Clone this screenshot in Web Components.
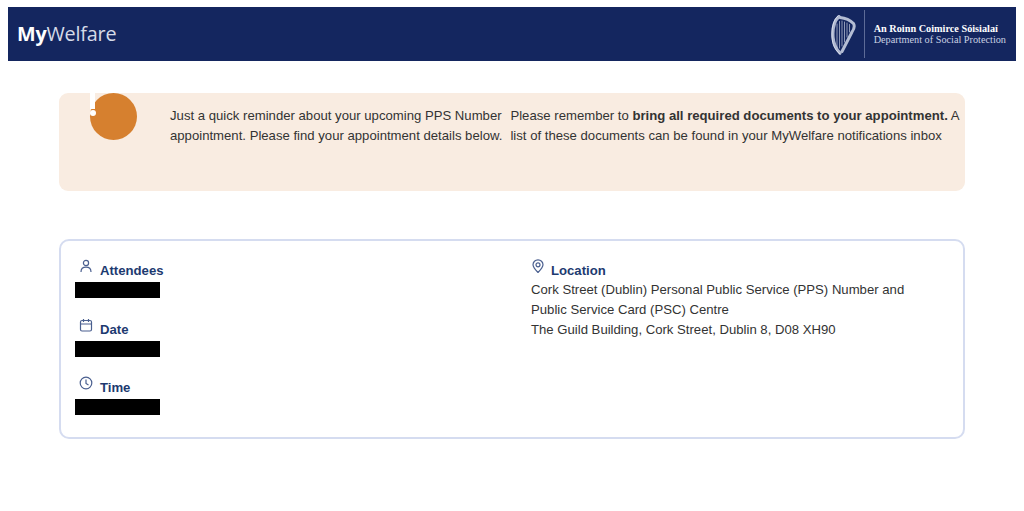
<!DOCTYPE html>
<html lang="en">
<head>
<meta charset="UTF-8">
<title>MyWelfare</title>
<style>
    html, body { margin: 0; background: #fff; }
    body { padding: 7px 8px 0; font-family: "Liberation Sans", Arial, sans-serif; color: #333; }
    main { display: block; padding: 32px 51px 0; }
</style>
</head>
<body>
<mw-header></mw-header>
<main>
    <mw-alert>
        <span slot="left">Just a quick reminder about your upcoming PPS Number appointment. Please find your appointment details below.</span>
        <span slot="right">Please remember to <b>bring all required documents to your appointment.</b> A list of these documents can be found in your MyWelfare notifications inbox</span>
    </mw-alert>
    <mw-card>
        <mw-detail slot="left" label="Attendees" icon="person"><mw-redacted></mw-redacted></mw-detail>
        <mw-detail slot="left" label="Date" icon="calendar"><mw-redacted></mw-redacted></mw-detail>
        <mw-detail slot="left" label="Time" icon="clock"><mw-redacted></mw-redacted></mw-detail>
        <mw-detail slot="right" label="Location" icon="pin">
            Cork Street (Dublin) Personal Public Service (PPS) Number and<br>
            Public Service Card (PSC) Centre<br>
            The Guild Building, Cork Street, Dublin 8, D08 XH90
        </mw-detail>
    </mw-card>
</main>

<script>
    class MwHeader extends HTMLElement {
        constructor() {
            super();
            this.attachShadow({mode: 'open'});
            this.shadowRoot.innerHTML = `
          <style>
            :host {
              display: flex;
              align-items: center;
              justify-content: space-between;
              height: 54px;
              background: #14265f;
              padding: 0 10px 0 9px;
              color: #fff;
            }
            .logo { font: 19.8px "Open Sans", sans-serif; letter-spacing: -0.2px; color: #d5dbe8; margin-top: -2px; }
            .logo b { color: #fff; font-weight: 700; }
            .dept { display: flex; align-items: center; height: 100%; }
            .harp { width: 26px; height: 40px; margin-top: 1px; }
            .rule { width: 1px; height: 48px; margin: 0 9px 0 7px; background: #5d6b97; }
            .name { font: 10.25px/11px "Liberation Serif", serif; color: #c9d0e2; white-space: nowrap; margin-top: -1px; }
            .name b { display: block; color: #fff; }
          </style>
          <div class="logo"><b>My</b>Welfare</div>
          <div class="dept">
            <svg class="harp" viewBox="0 0 26 40" fill="none" stroke="#c6cde0" stroke-linecap="round">
              <path stroke-width="3.200" stroke="#aeb7d0" d="M8 1.500C3 6 1.500 14 2 22 2.500 29 5 34 9 38"/>
              <path stroke-width="0.8" stroke="#e4e8f2" d="M7 1C2 5 0.500 14 1 22 1.500 30 4 35 9 39"/>
              <path stroke-width="3" stroke="#b4bdd4" d="M9 2.500C14 3 19 5 22.500 8.500 24 11 23 14 21 17L11 36.500"/>
              <path stroke-width="0.7" d="M6 9V33M8.500 6.500V33M11 6V31M13.500 7V27M16 8V22M18.500 9.500V17"/>
            </svg>
            <div class="rule"></div>
            <div class="name"><b>An Roinn Coimirce Sóisialaí</b>Department of Social Protection</div>
          </div>
        `;
        }
    }

    class MwAlert extends HTMLElement {
        constructor() {
            super();
            this.attachShadow({mode: 'open'});
            this.shadowRoot.innerHTML = `
          <style>
            :host {
              display: flex;
              box-sizing: border-box;
              height: 98px;
              background: #f9ece1;
              border-radius: 9px;
              padding: 0 0 0 31px;
              font-size: 13.15px;
              line-height: 20px;
              color: #333;
            }
            .badge {
              position: relative;
              flex: none;
              width: 47px;
              height: 47px;
              margin-right: 33px;
              border-radius: 50%;
              background: #d6802f;
            }
            /* the exclamation mark pokes out of the circle's top left */
            .bar { position: absolute; left: 0; top: 0; width: 5px; height: 16px; background: #fff; }
            .dot { position: absolute; left: 0; top: 17px; width: 6px; height: 6px; border-radius: 50%; background: #fff; }
            .col { padding-top: 13px; }
            .left { width: 341.500px; }
            .right { width: 456px; }
          </style>
          <div class="badge"><div class="bar"></div><div class="dot"></div></div>
          <div class="col left"><slot name="left"></slot></div>
          <div class="col right"><slot name="right"></slot></div>
        `;
        }
    }

    class MwCard extends HTMLElement {
        constructor() {
            super();
            this.attachShadow({mode: 'open'});
            this.shadowRoot.innerHTML = `
          <style>
            :host {
              display: grid;
              grid-template-columns: 456px 1fr;
              box-sizing: border-box;
              height: 200px;
              margin-top: 48px;
              padding: 20px 14px 0;
              border: 2px solid #d5dcf0;
              border-radius: 10px;
              font-size: 13.15px;
              line-height: 20px;
              color: #333;
            }
            .left { display: flex; flex-direction: column; gap: 21.5px; }
          </style>
          <div class="left"><slot name="left"></slot></div>
          <div><slot name="right"></slot></div>
        `;
        }
    }

    const ICONS = {
        person: '<circle cx="7" cy="4" r="2.6"/><path d="M2 13c0-3 2.200-4.800 5-4.800s5 1.800 5 4.800"/>',
        calendar: '<rect x="1.500" y="2.500" width="11" height="10.500" rx="1.500"/><path d="M1.500 6h11M4.500 1v3M9.500 1v3"/>',
        clock: '<circle cx="7" cy="7" r="5.800"/><path d="M7 3.500V7.500L9.500 9"/>',
        pin: '<path d="M7 13.500C4 10.500 2 8.200 2 5.800a5 5 0 0 1 10 0C12 8.200 10 10.500 7 13.500z"/><circle cx="7" cy="5.800" r="2"/>'
    };

    class MwDetail extends HTMLElement {
        constructor() {
            super();
            this.attachShadow({mode: 'open'});
        }

        connectedCallback() {
            this.shadowRoot.innerHTML = `
          <style>
            :host { display: block; }
            .head {
              display: flex;
              align-items: flex-start;
              gap: 7px;
              height: 20px;
              padding-left: 4px;
              font-weight: 700;
              color: #1d3a70;
            }
            :host([icon="pin"]) .head { padding-left: 0; gap: 6px; }
            svg {
              width: 14px;
              height: 14px;
              margin-top: -2px;
              fill: none;
              stroke: #4a5f8f;
              stroke-width: 1.200;
            }
            .body { margin-top: -1px; }
          </style>
          <div class="head">
            <svg viewBox="0 0 14 14">${ICONS[this.getAttribute('icon')]}</svg>
            <span>${this.getAttribute('label')}</span>
          </div>
          <div class="body"><slot></slot></div>
        `;
        }
    }

    class MwRedacted extends HTMLElement {
        constructor() {
            super();
            this.attachShadow({mode: 'open'});
            this.shadowRoot.innerHTML = `
          <style>
            :host { display: block; width: 85px; height: 16px; margin-top: 2px; background: #000; }
          </style>
        `;
        }
    }

    customElements.define('mw-header', MwHeader);
    customElements.define('mw-alert', MwAlert);
    customElements.define('mw-card', MwCard);
    customElements.define('mw-detail', MwDetail);
    customElements.define('mw-redacted', MwRedacted);
</script>
</body>
</html>
